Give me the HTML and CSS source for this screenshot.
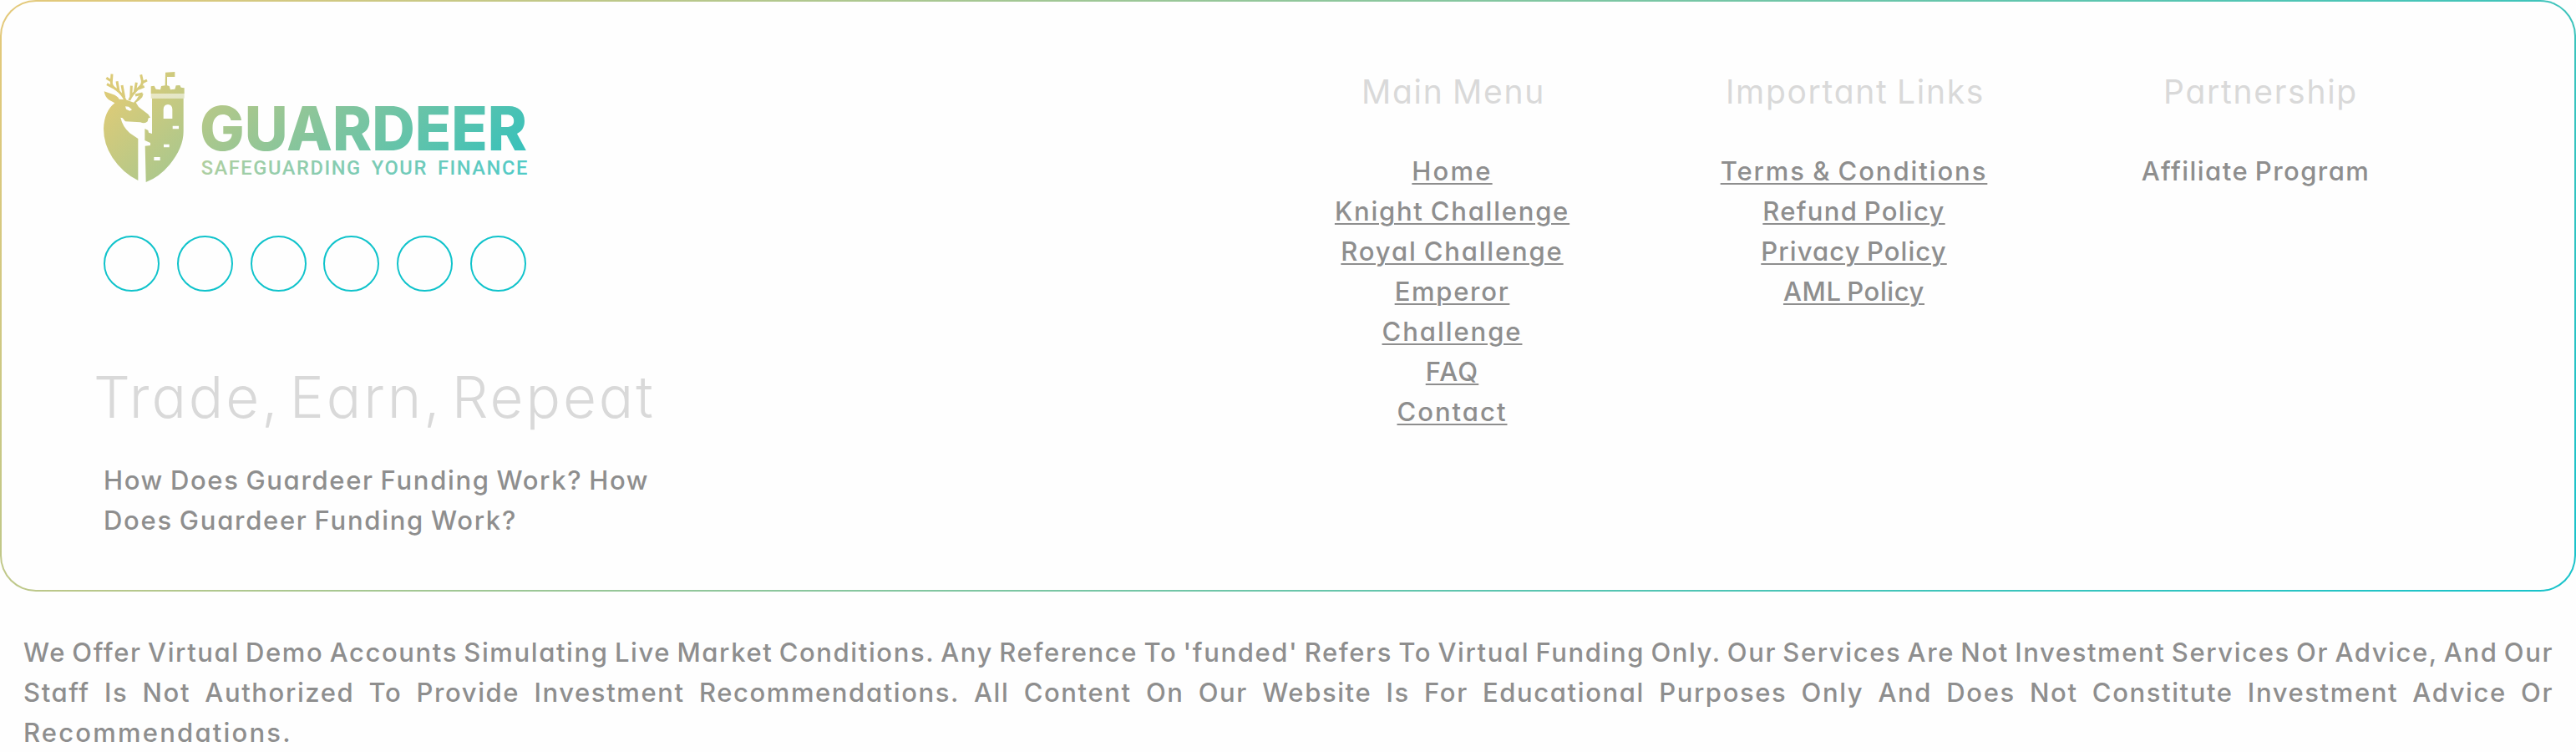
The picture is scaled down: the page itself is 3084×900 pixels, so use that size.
FILE: index.html
```html
<!DOCTYPE html>
<html lang="en">
<head>
<meta charset="utf-8">
<title>Guardeer</title>
<link rel="stylesheet" href="styles.css">
</head>
<body>
<footer>
  <div class="card">
    <div class="brand">
      <svg class="logo" viewBox="72 42 1524 410" role="img" aria-label="Guardeer">
        <defs>
          <linearGradient id="g" gradientUnits="userSpaceOnUse" x1="125" y1="125" x2="975" y2="975">
            <stop offset="0" stop-color="#dccb78"/>
            <stop offset=".5" stop-color="#84c59d"/>
            <stop offset="1" stop-color="#35c1bc"/>
          </linearGradient>
        </defs>
        <g fill="url(#g)">
          <!-- stag head and neck -->
          <path d="M74 118 L104 128 Q122 134 128 146 L152 148 L180 158 Q190 150 198 134 L215 126 L211 139 Q202 150 188 158 L198 174 L232 200 L240 212 L233 214 L230 226 Q220 236 204 229 L150 226 L140 214 L133 212 Q140 244 166 268 L196 288 L196 438 Q140 410 104 356 Q72 308 72 252 Q74 190 112 160 L90 148 Q76 136 74 118 Z"/>
          <!-- tower half of the shield -->
          <path d="M242 100 L254 98 L260 110 L276 112 L279 99 L293 97 L294 50 L328 48 L328 66 L300 66 L300 97 L308 99 L312 112 L328 110 L332 97 L346 96 L350 104 L362 106 L362 126 L242 126 Z"/>
          <path opacity=".45" d="M242 126H362V143H242Z"/>
          <path fill-rule="evenodd" d="M246 143 H359 V262 Q359 320 310 380 Q272 426 224 444 L221 314 L240 312 L240 303 L220 294 L220 252 L232 258 L234 266 L246 270 Z M287 216 H319 V182 Q318 166 303 165 Q288 166 287 182 Z M320 242 V253 H342 V242 Z M288 308 V319 H308 V308 Z M253 354 V366 H275 V354 Z"/>
        </g>
        <path d="M150 172 L162 173 L174 184 L166 188 L153 182 Z" fill="#fefefe"/>
        <!-- antlers -->
        <g fill="none" stroke="url(#g)" stroke-width="9">
          <path d="M150 150 Q140 128 116 110 Q98 98 100 84 L102 56 M101 82 L82 70 M108 105 L84 92 M126 118 L120 82 M146 140 L138 96"/>
          <path d="M164 150 Q174 128 196 108 Q213 96 211 80 L206 58 M212 86 L228 78 M198 108 L218 100 M184 120 L190 86 M170 140 L172 98 M186 132 L212 126"/>
        </g>
        <text class="logo-name" x="417" y="329" textLength="1176" lengthAdjust="spacingAndGlyphs" fill="url(#g)">GUARDEER</text>
        <text class="logo-tag" x="422" y="418" textLength="1172" fill="url(#g)">SAFEGUARDING YOUR FINANCE</text>
      </svg>
      <div class="socials"><i></i><i></i><i></i><i></i><i></i><i></i></div>
      <h2>Trade, Earn, Repeat</h2>
      <p class="intro"><span class="ls-how">How Does Guardeer Funding Work? How</span><br><span class="ls-does">Does Guardeer Funding Work?</span></p>
    </div>
    <nav>
      <section>
        <h3>Main Menu</h3>
        <a class="ls-home">Home</a>
        <a class="ls-knight">Knight Challenge</a>
        <a class="ls-royal">Royal Challenge</a>
        <a class="ls-emperor">Emperor</a>
        <a class="ls-challenge">Challenge</a>
        <a class="ls-faq">FAQ</a>
        <a class="ls-contact">Contact</a>
      </section>
      <section>
        <h3>Important Links</h3>
        <a class="ls-terms">Terms &amp; Conditions</a>
        <a class="ls-refund">Refund Policy</a>
        <a class="ls-privacy">Privacy Policy</a>
        <a class="ls-aml">AML Policy</a>
      </section>
      <section>
        <h3 class="inset">Partnership</h3>
        <span class="ls-affiliate">Affiliate Program</span>
      </section>
    </nav>
  </div>
  <p class="disclaimer">
    <span>We Offer Virtual Demo Accounts Simulating Live Market Conditions. Any Reference To 'funded' Refers To Virtual Funding Only. Our Services Are Not Investment Services Or Advice, And Our</span>
    <span>Staff Is Not Authorized To Provide Investment Recommendations. All Content On Our Website Is For Educational Purposes Only And Does Not Constitute Investment Advice Or</span>
    <span class="last">Recommendations.</span>
  </p>
</footer>
</body>
</html>
```
FILE: styles.css
```css
* { box-sizing: border-box; }
body {
  margin: 0;
  height: 900px;
  overflow: hidden;
  background: #fefefe;
  color: #8e8e8e;
  font: 500 31px/48px Inter, "Liberation Sans", sans-serif;
  font-feature-settings: "cv11";
  word-spacing: -2px;
}
h2, h3, p { margin: 0; }

.card {
  display: flex;
  justify-content: space-between;
  height: 708px;
  padding: 82px 141px 0 122px;
  border: 2px solid transparent;
  border-radius: 43px;
  background:
    linear-gradient(#fefefe, #fefefe) padding-box,
    linear-gradient(135deg, #e5c97a, #17c3cb) border-box;
}

.brand { width: 700px; }
.logo { display: block; width: 508px; height: 136.67px; overflow: visible; }
.logo-name { font: 800 219px Inter, sans-serif; }
.logo-tag { font: 500 71px Roboto, sans-serif; word-spacing: 14px; opacity: .85; }

.socials {
  display: flex;
  justify-content: space-between;
  width: 506px;
  margin-top: 61px;
}
.socials i {
  width: 67px;
  height: 67px;
  border: 2px solid #10c3cb;
  border-radius: 50%;
}

h2 {
  margin: 84px 0 34.5px -12px;
  color: #d9d9d9;
  font-size: 69px;
  font-weight: 300;
  line-height: 84px;
  letter-spacing: 2.9px;
  word-spacing: -11px;
}

nav { display: grid; grid-template-columns: repeat(3, 481px); }
section {
  display: flex;
  flex-direction: column;
  align-items: center;
  padding-top: 2px;
}
h3 {
  margin-bottom: 46.5px;
  padding-left: 3px;
  color: #d9d9d9;
  font-size: 39px;
  font-weight: 400;
  line-height: 48px;
  letter-spacing: 1.7px;
}
.inset { padding-left: 12px; }
a {
  text-decoration: underline;
  text-decoration-thickness: 2px;
  text-underline-offset: 3px;
}

.ls-how { letter-spacing: 1.66px; }
.ls-does { letter-spacing: 1.72px; }
.ls-home { letter-spacing: 2.18px; }
.ls-knight { letter-spacing: 1.77px; }
.ls-royal { letter-spacing: 1.84px; }
.ls-emperor { letter-spacing: 1.71px; }
.ls-challenge { letter-spacing: 1.94px; }
.ls-faq { letter-spacing: 1.13px; }
.ls-contact { letter-spacing: 2px; }
.ls-terms { letter-spacing: 1.93px; }
.ls-refund { letter-spacing: 1.29px; }
.ls-privacy { letter-spacing: 1.1px; }
.ls-aml { letter-spacing: .58px; }
.ls-affiliate { letter-spacing: 1.45px; }

.disclaimer {
  padding: 48.5px 27px 0 28px;
  letter-spacing: 1.6px;
  word-spacing: -3.5px;
}
.disclaimer span {
  display: block;
  text-align: justify;
  text-align-last: justify;
}
.disclaimer .last { text-align-last: left; letter-spacing: 2.2px; }
```
